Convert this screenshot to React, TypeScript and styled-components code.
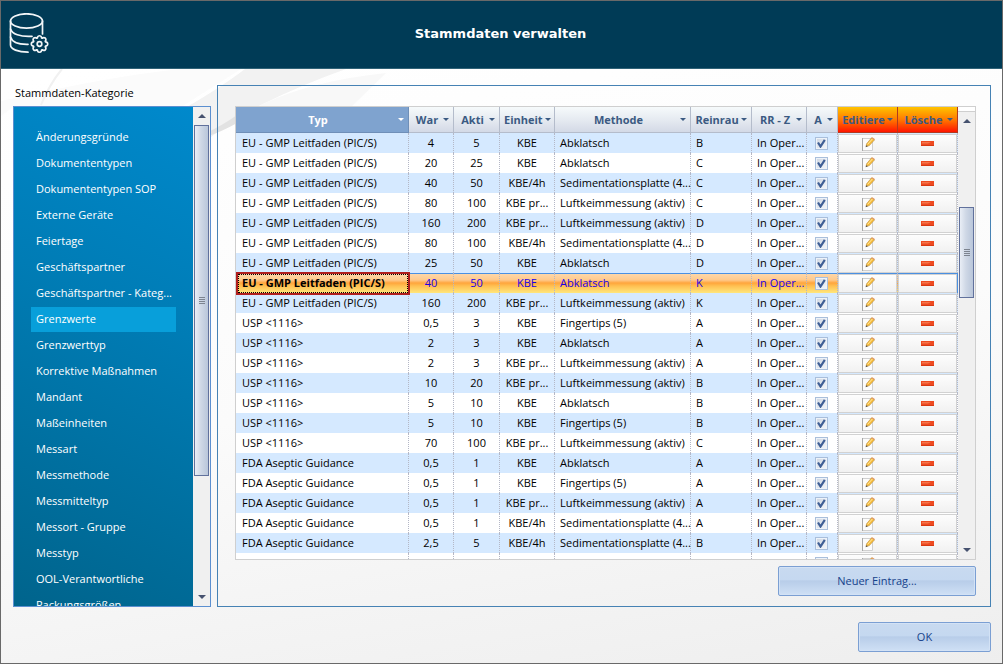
import React from 'react';
import styled, { createGlobalStyle, css } from 'styled-components';

const GlobalStyle = createGlobalStyle`
  *, *::before, *::after { box-sizing: border-box; }
  body { margin: 0; }
  body, button, input, table {
    font-family: 'Open Sans', 'Noto Sans', sans-serif;
    font-size: 11px;
    line-height: 16px;
    color: #000;
  }
`;

const Window = styled.div`
  position: relative;
  display: flex;
  flex-direction: column;
  height: 100vh;
  min-height: 400px;
  border: 1px solid #696969;
  background: linear-gradient(170deg, #ffffff 10%, #fbfbfb 55%, #eeeeee 100%);
  overflow: hidden;
`;

const Swoosh = styled.svg`
  position: absolute;
  top: 0;
  left: 0;
  width: 1003px;
  height: 300px;
  pointer-events: none;
`;

const Header = styled.header`
  position: relative;
  display: flex;
  align-items: center;
  flex: none;
  height: 68px;
  padding: 0 8px 2px;
  background: #003b56;
  border-bottom: 1px solid #2f6277;
`;

const Title = styled.h1`
  flex: 1;
  margin: 0 44px 0 0;
  text-align: center;
  font: bold 13px/20px 'DejaVu Sans', sans-serif;
  color: #fff;
`;

const Content = styled.main`
  position: relative;
  display: flex;
  gap: 6px;
  flex: 1;
  min-height: 0;
  padding: 16px 11px 0 12px;
`;

const Category = styled.section`
  display: flex;
  flex-direction: column;
  flex: none;
  width: 198px;
`;

const CategoryTitle = styled.h2`
  margin: 0 2px 5px;
  font-size: 11px;
  font-weight: normal;
  line-height: 16px;
`;

const CategoryBox = styled.div`
  display: flex;
  flex: 1;
  min-height: 0;
  border: 1px solid #5b8fd0;
`;

const CategoryList = styled.nav`
  flex: 1;
  min-width: 0;
  overflow: hidden;
  padding: 18px 17px 0;
  background: linear-gradient(205deg, #0089cc 0%, #007cb5 40%, #00648c 100%);
`;

const CategoryLink = styled.a<{ $active?: boolean }>`
  display: block;
  height: 25px;
  margin-bottom: 1px;
  padding: 0 5px;
  line-height: 24px;
  color: #fff;
  text-decoration: none;
  white-space: nowrap;
  background: ${p => (p.$active ? '#089fda' : 'transparent')};
`;

const Panel = styled.section`
  display: flex;
  flex-direction: column;
  align-items: flex-end;
  flex: 1;
  min-width: 0;
  padding: 20px 14px 10px 17px;
  border: 1px solid #4682b4;
`;

const GridBox = styled.div`
  display: flex;
  flex: 1;
  align-self: stretch;
  min-height: 0;
  overflow: hidden;
  border: 1px solid #cfcfcf;
  background: #fff;
`;

const GridView = styled.div`
  flex: 1;
  min-width: 0;
  overflow: hidden;
`;

const Table = styled.table`
  width: 100%;
  table-layout: fixed;
  border-collapse: separate;
  border-spacing: 0;
`;

const tones = {
  plain: css`
    background: linear-gradient(#f6fafb, #e4e9f0 55%, #d3d9e6);
    color: #3b5a82;
    border-color: #b4bccb;
  `,
  sorted: css`
    background: #7fa3cf;
    color: #fff;
    border-color: #6f8fb8;
  `,
  action: css`
    background: linear-gradient(#ffc400, #ff7a00 50%, #ff1400);
    color: #3b5a82;
    border-color: #b23a1e;
  `,
};

const HeadCell = styled.th<{ $tone: keyof typeof tones }>`
  height: 26px;
  padding: 0 4px;
  border: solid;
  border-width: 0 1px 1px 0;
  ${p => tones[p.$tone]}
`;

const HeadLabel = styled.div`
  display: flex;
  align-items: center;
  gap: 2px;
  font-weight: bold;
  white-space: nowrap;

  span { flex: 1; text-align: center; }
  svg { flex: none; }
`;

const Row = styled.tr<{ $selected?: boolean }>`
  background: #fff;
  &:nth-child(odd) { background: #d5e9ff; }
  ${p => p.$selected && css`
    && {
      background: linear-gradient(#fdd9ae 0%, #ffc98b 35%, #ffa53c 50%, #ffc052 65%, #ffe67c 100%);
      color: #1a00e6;
    }
    td { box-shadow: inset 0 1px #4a90e2; }
    td:last-child { border-right: 1px solid #4a90e2; }
  `}
`;

const Cell = styled.td<{ $center?: boolean }>`
  height: 20px;
  padding: 0 0 0 5px;
  ${p => p.$center && 'padding: 0; text-align: center;'}
  border-right: 1px dotted #b4b7c6;
  line-height: 20px;
  white-space: nowrap;
`;

const TypeCell = styled(Cell)<{ $focused?: boolean }>`
  padding-left: 6px;
  ${p => p.$focused && css`
    position: relative;
    font-weight: bold;
    color: #000;
    &::before, &::after { content: ''; position: absolute; }
    &::before { inset: -1px -2px -2px 0; border: 2px solid #b01e1e; }
    &::after { inset: 1px 0 0 2px; border: 1px dotted #000; }
  `}
`;

const ActionCell = styled(Cell)`
  padding: 1px 0 0;
`;

const RowButton = styled.button`
  display: flex;
  align-items: center;
  justify-content: center;
  width: 100%;
  height: 19px;
  padding: 0;
  border: 1px solid #d2d2d2;
  background: linear-gradient(#fdfdfd, #f1f1f1);
`;

const Check = styled.label`
  display: grid;
  place-items: center;
  height: 20px;
  padding-right: 1px;
  input, svg { grid-area: 1 / 1; }
  svg { pointer-events: none; }
`;

const CheckInput = styled.input`
  appearance: none;
  width: 13px;
  height: 13px;
  margin: 0;
  border: 1px solid #a9bfdc;
  background: linear-gradient(135deg, #cdd5e1, #f6f8fb);
  box-shadow: inset 0 0 0 1px #eef3f9;
`;

const Scrollbar = styled.div`
  display: flex;
  flex-direction: column;
  flex: none;
  width: 17px;
  background: #f0f0f0;
`;

const HeadStub = styled.div`
  height: 5px;
  border-bottom: 1px solid #cfcfcf;
  background: #fff;
`;

const ScrollArrow = styled.button`
  display: flex;
  align-items: center;
  justify-content: center;
  flex: none;
  height: 18px;
  padding: 0;
  border: 0;
  background: transparent;
`;

const Gap = styled.div<{ $grow: number }>`
  flex: ${p => p.$grow} 1 0;
`;

const Thumb = styled.div<{ $grow: number }>`
  display: flex;
  align-items: center;
  justify-content: center;
  flex: ${p => p.$grow} 1 0;
  margin: 0 1px;
  border: 1px solid #61719c;
  background: linear-gradient(90deg, #e9eef6, #cfd8e6 45%, #b9c6da);
`;

const CommandButton = styled.button<{ $width: number }>`
  flex: none;
  width: ${p => p.$width}px;
  height: 30px;
  border: 1px solid #7b9fd3;
  border-radius: 2px;
  background: linear-gradient(#c8daf0 0%, #c5d8f0 45%, #b8cde9 50%, #cfe0f5 100%);
  box-shadow: inset 0 0 0 1px #d3e2f5;
  color: #15428b;
`;

const NewEntry = styled(CommandButton)`
  margin-top: 6px;
`;

const Footer = styled.footer`
  position: relative;
  display: flex;
  justify-content: flex-end;
  flex: none;
  padding: 15px 11px 11px;
`;

const Arrow = ({ up }: { up?: boolean }) => (
  <svg width="8" height="4" viewBox="0 0 8 4" aria-hidden="true">
    <path d={up ? 'M0 4L4 0L8 4Z' : 'M0 0L4 4L8 0Z'} fill="#46526f" />
  </svg>
);

const Caret = () => (
  <svg width="6" height="3" viewBox="0 0 6 3" aria-hidden="true">
    <path d="M0 0H6L3 3Z" fill="currentColor" />
  </svg>
);

const Grip = () => (
  <svg width="6" height="7" viewBox="0 0 6 7" aria-hidden="true">
    <path d="M0 .5H6M0 2.5H6M0 4.5H6M0 6.5H6" stroke="#7d8490" />
  </svg>
);

const Tick = () => (
  <svg width="9" height="9" viewBox="0 0 9 9" aria-hidden="true">
    <path d="M1 3.5L3.500 7.500L7.800 .8" fill="none" stroke="#3f5f96" strokeWidth="2.200" />
  </svg>
);

const PencilIcon = () => (
  <svg width="14" height="14" viewBox="0 0 14 14" aria-hidden="true">
    <path d="M1.500 1.500H11.500V13.500H1.500Z" fill="#fcfcfc" stroke="#d0d0d0" />
    <path d="M1.500 1V14" stroke="#a8a8a8" />
    <path d="M5 9.600L5.600 6.800L10.600 .8L13.600 2.800L8.300 8.600Z" fill="#f7bd3c" stroke="#b98a3a" strokeWidth=".6" />
    <path d="M6.700 7.300L11.500 1.800" stroke="#ffe7a0" strokeWidth="1" />
    <path d="M10.400 1L11.200 .2L13.900 2.100L13.200 3.100Z" fill="#e39a6a" />
    <path d="M4.600 10.300L5.300 8.200L6.900 9.300Z" fill="#555" />
  </svg>
);

const MinusIcon = () => (
  <svg width="13" height="5" viewBox="0 0 13 5" aria-hidden="true">
    <path d="M0 0H13V5H0Z" fill="#ee4a20" />
    <path d="M1 1H10L7 2.500H1Z" fill="#f4764c" />
    <path d="M0 4.500H13" stroke="#d63a14" />
  </svg>
);

const gear = Array.from({ length: 8 }, (_, i) => {
  const at = (r: number, deg: number) => {
    const a = ((i * 45 + deg) * Math.PI) / 180;
    return `${(30.5 + r * Math.cos(a)).toFixed(2)} ${(31 + r * Math.sin(a)).toFixed(2)}`;
  };
  return `${i ? 'L' : 'M'}${at(6.4, -19)}L${at(7.3, -15)}A2.1 2.1 0 0 1 ${at(7.3, 15)}L${at(6.4, 19)}`;
}).join('') + 'Z';

const DatabaseIcon = () => (
  <svg width="42" height="42" viewBox="0 0 42 42" fill="none" stroke="#f2f6f8" strokeWidth="1.7" strokeLinecap="round" aria-hidden="true">
    <ellipse cx="17.5" cy="8" rx="16" ry="7.2" />
    <path d="M1.500 8V32C1.500 36 9 39.200 19 39.200" />
    <path d="M33.500 8V21" />
    <path d="M1.500 16C3 21 11 24 23 23.300" />
    <path d="M1.500 24C3 29 10 31.500 19 31.300" />
    <path d={gear} strokeLinejoin="round" />
    <circle cx="30.5" cy="31" r="2.300" />
  </svg>
);

const categories = [
  'Änderungsgründe', 'Dokumententypen', 'Dokumententypen SOP', 'Externe Geräte', 'Feiertage',
  'Geschäftspartner', 'Geschäftspartner - Kateg...', 'Grenzwerte', 'Grenzwerttyp',
  'Korrektive Maßnahmen', 'Mandant', 'Maßeinheiten', 'Messart', 'Messmethode', 'Messmitteltyp',
  'Messort - Gruppe', 'Messtyp', 'OOL-Verantwortliche', 'Packungsgrößen',
];

const columns: { label: string; width?: number; tone: keyof typeof tones }[] = [
  { label: 'Typ', width: 173, tone: 'sorted' },
  { label: 'War', width: 45, tone: 'plain' },
  { label: 'Akti', width: 46, tone: 'plain' },
  { label: 'Einheit', width: 55, tone: 'plain' },
  { label: 'Methode', tone: 'plain' },
  { label: 'Reinrau', width: 61, tone: 'plain' },
  { label: 'RR - Z', width: 55, tone: 'plain' },
  { label: 'A', width: 31, tone: 'plain' },
  { label: 'Editiere', width: 60, tone: 'action' },
  { label: 'Lösche', width: 60, tone: 'action' },
];

const EU = 'EU - GMP Leitfaden (PIC/S)';
const USP = 'USP <1116>';
const FDA = 'FDA Aseptic Guidance';
const SEDI = 'Sedimentationsplatte (4...';
const LUFT = 'Luftkeimmessung (aktiv)';

const limits = [
  [EU, '4', '5', 'KBE', 'Abklatsch', 'B'],
  [EU, '20', '25', 'KBE', 'Abklatsch', 'C'],
  [EU, '40', '50', 'KBE/4h', SEDI, 'C'],
  [EU, '80', '100', 'KBE pr...', LUFT, 'C'],
  [EU, '160', '200', 'KBE pr...', LUFT, 'D'],
  [EU, '80', '100', 'KBE/4h', SEDI, 'D'],
  [EU, '25', '50', 'KBE', 'Abklatsch', 'D'],
  [EU, '40', '50', 'KBE', 'Abklatsch', 'K'],
  [EU, '160', '200', 'KBE pr...', LUFT, 'K'],
  [USP, '0,5', '3', 'KBE', 'Fingertips (5)', 'A'],
  [USP, '2', '3', 'KBE', 'Abklatsch', 'A'],
  [USP, '2', '3', 'KBE pr...', LUFT, 'A'],
  [USP, '10', '20', 'KBE pr...', LUFT, 'B'],
  [USP, '5', '10', 'KBE', 'Abklatsch', 'B'],
  [USP, '5', '10', 'KBE', 'Fingertips (5)', 'B'],
  [USP, '70', '100', 'KBE pr...', LUFT, 'C'],
  [FDA, '0,5', '1', 'KBE', 'Abklatsch', 'A'],
  [FDA, '0,5', '1', 'KBE', 'Fingertips (5)', 'A'],
  [FDA, '0,5', '1', 'KBE pr...', LUFT, 'A'],
  [FDA, '0,5', '1', 'KBE/4h', SEDI, 'A'],
  [FDA, '2,5', '5', 'KBE/4h', SEDI, 'B'],
  ['', '', '', '', '', ''],
];

const SELECTED = 7;

export default function App() {
  return (
    <>
      <GlobalStyle />
      <Window>
        <Swoosh viewBox="0 0 1003 300" aria-hidden="true">
          <path d="M0 100Q110 75 180 68H240L180 106H12L0 115Z" fill="#fbfbfb" />
          <path d="M170 115Q215 90 244 68H345Q300 84 262 103Q225 120 195 150Z" fill="#f2f2f2" />
          <path d="M262 103Q310 80 385 72L350 106H256Z" fill="#f8f8f8" />
          <path d="M205 132Q222 124 236 114V122Q222 130 205 136Z" fill="#e2e2e2" />
          <path d="M61 68Q48 84 40 104" stroke="#f1f1f1" strokeWidth="2" fill="none" />
        </Swoosh>
        <Header>
          <DatabaseIcon />
          <Title>Stammdaten verwalten</Title>
        </Header>
        <Content>
          <Category>
            <CategoryTitle>Stammdaten-Kategorie</CategoryTitle>
            <CategoryBox>
              <CategoryList aria-label="Stammdaten-Kategorie">
                {categories.map(name => (
                  <CategoryLink key={name} href="#" $active={name === 'Grenzwerte'}>{name}</CategoryLink>
                ))}
              </CategoryList>
              <Scrollbar>
                <ScrollArrow aria-label="Nach oben"><Arrow up /></ScrollArrow>
                <Thumb $grow={351}><Grip /></Thumb>
                <Gap $grow={112} />
                <ScrollArrow aria-label="Nach unten"><Arrow /></ScrollArrow>
              </Scrollbar>
            </CategoryBox>
          </Category>
          <Panel>
            <GridBox>
              <GridView>
                <Table>
                  <colgroup>
                    {columns.map(c => <col key={c.label} width={c.width} />)}
                  </colgroup>
                  <thead>
                    <tr>
                      {columns.map(c => (
                        <HeadCell key={c.label} $tone={c.tone}>
                          <HeadLabel><span>{c.label}</span><Caret /></HeadLabel>
                        </HeadCell>
                      ))}
                    </tr>
                  </thead>
                  <tbody>
                    {limits.map(([type, warn, action, unit, method, room], i) => (
                      <Row key={i} $selected={i === SELECTED}>
                        <TypeCell $focused={i === SELECTED}>{type}</TypeCell>
                        <Cell $center>{warn}</Cell>
                        <Cell $center>{action}</Cell>
                        <Cell $center>{unit}</Cell>
                        <Cell>{method}</Cell>
                        <Cell>{room}</Cell>
                        <Cell>{type && 'In Oper...'}</Cell>
                        <Cell $center>
                          <Check>
                            <CheckInput type="checkbox" defaultChecked aria-label="Aktiv" />
                            <Tick />
                          </Check>
                        </Cell>
                        <ActionCell><RowButton aria-label="Editieren"><PencilIcon /></RowButton></ActionCell>
                        <ActionCell><RowButton aria-label="Löschen"><MinusIcon /></RowButton></ActionCell>
                      </Row>
                    ))}
                  </tbody>
                </Table>
              </GridView>
              <Scrollbar>
                <HeadStub />
                <ScrollArrow aria-label="Nach oben"><Arrow up /></ScrollArrow>
                <Gap $grow={77} />
                <Thumb $grow={90}><Grip /></Thumb>
                <Gap $grow={244} />
                <ScrollArrow aria-label="Nach unten"><Arrow /></ScrollArrow>
              </Scrollbar>
            </GridBox>
            <NewEntry $width={198}>Neuer Eintrag...</NewEntry>
          </Panel>
        </Content>
        <Footer>
          <CommandButton $width={133}>OK</CommandButton>
        </Footer>
      </Window>
    </>
  );
}
